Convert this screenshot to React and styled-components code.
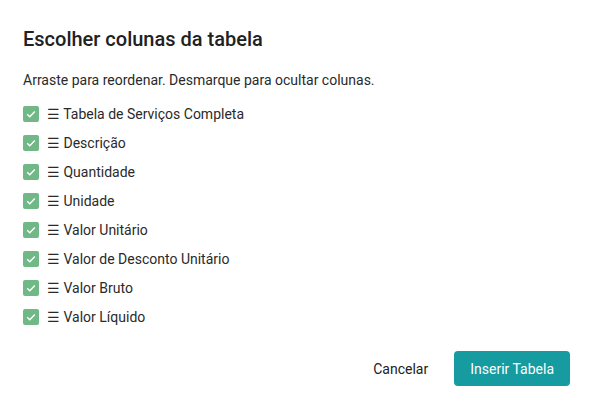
import React from 'react';
import styled, { createGlobalStyle } from 'styled-components';

const GlobalStyle = createGlobalStyle`
  html, body {
    margin: 0;
    padding: 0;
    background: #fff;
    font-family: Roboto, "Noto Sans", sans-serif;
  }
`;

const Dialog = styled.div`
  width: 598px;
  height: 401px;
  box-sizing: border-box;
  padding: 23px 28px 15px 23px;
  display: flex;
  flex-direction: column;
  background: #fff;
  color: #212121;
`;

const Title = styled.h2`
  margin: 0;
  font-size: 20px;
  line-height: 32px;
  font-weight: 500;
  color: #212121;
`;

const Hint = styled.p`
  margin: 13px 0 0;
  font-size: 14px;
  line-height: 24px;
  color: #2a2a2a;
`;

const List = styled.div`
  margin-top: 8px;
  display: flex;
  flex-direction: column;
`;

const Row = styled.label`
  display: flex;
  align-items: center;
  gap: 8px;
  height: 28.9px;
  font-size: 14px;
  color: #2a2a2a;
  cursor: grab;
`;

const Box = styled.span`
  width: 16px;
  height: 16px;
  border-radius: 2px;
  background: ${(p) => (p.checked ? '#70b886' : '#fff')};
  border: ${(p) => (p.checked ? 'none' : '1px solid #999')};
  display: flex;
  align-items: center;
  justify-content: center;
  flex-shrink: 0;
`;

const Footer = styled.div`
  margin-top: auto;
  display: flex;
  justify-content: flex-end;
  align-items: center;
  gap: 10px;
`;

const Button = styled.button`
  height: 35px;
  padding: 0 16px;
  border: none;
  border-radius: 4px;
  font-family: inherit;
  font-size: 14px;
  background: ${(p) => (p.primary ? '#159ba0' : 'transparent')};
  color: ${(p) => (p.primary ? '#fff' : '#212121')};
  cursor: pointer;
`;

const columns = [
  'Tabela de Serviços Completa',
  'Descrição',
  'Quantidade',
  'Unidade',
  'Valor Unitário',
  'Valor de Desconto Unitário',
  'Valor Bruto',
  'Valor Líquido',
];

function Check({ checked }) {
  return (
    <Box checked={checked}>
      {checked && (
        <svg width="12" height="12" viewBox="0 0 12 12">
          <path d="M2.2 6.2l2.6 2.6 5-5.2" fill="none" stroke="#fff" strokeWidth="1.4" />
        </svg>
      )}
    </Box>
  );
}

export default function App() {
  return (
    <>
      <GlobalStyle />
      <Dialog>
        <Title>Escolher colunas da tabela</Title>
        <Hint>Arraste para reordenar. Desmarque para ocultar colunas.</Hint>
        <List>
          {columns.map((c) => (
            <Row key={c}>
              <Check checked />
              <span>☰ {c}</span>
            </Row>
          ))}
        </List>
        <Footer>
          <Button>Cancelar</Button>
          <Button primary>Inserir Tabela</Button>
        </Footer>
      </Dialog>
    </>
  );
}
